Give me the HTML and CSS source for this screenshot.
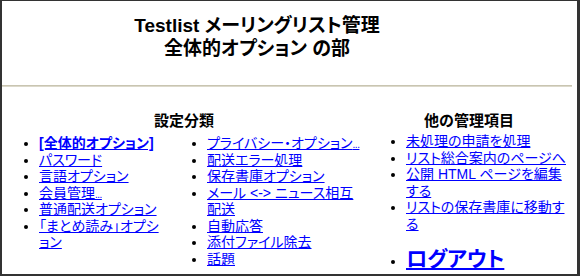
FILE: index.html
```html
<!DOCTYPE html>
<html lang="ja">

<head>
    <meta charset="UTF-8">
    <title>Testlist 管理</title>
    <link rel="stylesheet" href="styles.css">
</head>

<body>
    <div class="frame">
        <div class="head">
            <h1>Testlist メーリングリスト管理<br>全体的オプション の部</h1>
        </div>
        <hr class="rule">

        <div class="menu">
            <div class="group-left">
                <h2>設定分類</h2>
                <div class="cols">
                    <ul class="col col-1">
                        <li><a href="#" class="current">[全体的オプション]</a></li>
                        <li><a href="#">パスワード</a></li>
                        <li><a href="#">言語オプション</a></li>
                        <li><a href="#">会員管理<span class="dots">...</span></a></li>
                        <li><a href="#">普通配送オプション</a></li>
                        <li><a href="#">「まとめ読み」オプション</a></li>
                    </ul>
                    <ul class="col col-2">
                        <li class="nowrap"><a href="#">プライバシー・オプション<span class="dots">...</span></a></li>
                        <li><a href="#">配送エラー処理</a></li>
                        <li><a href="#">保存書庫オプション</a></li>
                        <li><a href="#">メール &lt;-&gt; ニュース相互配送</a></li>
                        <li><a href="#">自動応答</a></li>
                        <li><a href="#">添付ファイル除去</a></li>
                        <li><a href="#">話題</a></li>
                    </ul>
                </div>
            </div>
            <div class="group-right">
                <h2>他の管理項目</h2>
                <ul class="col col-3">
                    <li><a href="#">未処理の申請を処理</a></li>
                    <li><a href="#">リスト総合案内のページへ</a></li>
                    <li><a href="#">公開 HTML ページを編集する</a></li>
                    <li><a href="#">リストの保存書庫に移動する</a></li>
                    <li class="logout"><a href="#">ログアウト</a></li>
                </ul>
            </div>
        </div>
    </div>
</body>

</html>
```

FILE: styles.css
```css
* {
    margin: 0;
    padding: 0;
    box-sizing: border-box;
}

body {
    background-color: #fff;
    font-family: "Liberation Sans", "Noto Sans CJK JP", sans-serif;
    font-feature-settings: "palt";
    color: #000;
}

.frame {
    width: 580px;
    height: 276px;
    border-style: solid;
    border-color: #333;
    border-width: 1px 3px 2px 2px;
    overflow: hidden;
}

.head {
    width: 510px;
    padding-top: 13px;
}

.head h1 {
    font-size: 19px;
    line-height: 23px;
    font-weight: bold;
    text-align: center;
}

.rule {
    width: 570px;
    margin-top: 25px;
    border: 0;
    border-top: 1px solid #c9c5b1;
    border-bottom: 1px solid #dcd9cb;
}

.menu {
    display: flex;
    padding-top: 25px;
}

.group-left {
    width: 364px;
}

.group-right {
    width: 206px;
}

.menu h2 {
    font-size: 15px;
    line-height: 18px;
    font-weight: bold;
    text-align: center;
}

.cols {
    display: flex;
    padding-top: 5px;
}

.col {
    font-size: 14px;
    line-height: 16.5px;
    list-style: disc;
}

.col-1 {
    width: 164px;
    flex-shrink: 0;
    padding-left: 37px;
}

.col-2 {
    width: 196px;
    flex-shrink: 0;
    padding-left: 41px;
}

.col-3 {
    width: 200px;
    padding-left: 40px;
    padding-top: 3px;
}

.col a {
    color: #00f;
}

.col a.current {
    font-weight: bold;
}

/* 小さい三点リーダ */
.dots {
    font-size: 10px;
    line-height: 1;
    letter-spacing: -0.5px;
}

.nowrap {
    white-space: nowrap;
}

.logout {
    margin-top: 14px;
}

.logout a {
    font-size: 21px;
    line-height: 26px;
    font-weight: bold;
}
```
